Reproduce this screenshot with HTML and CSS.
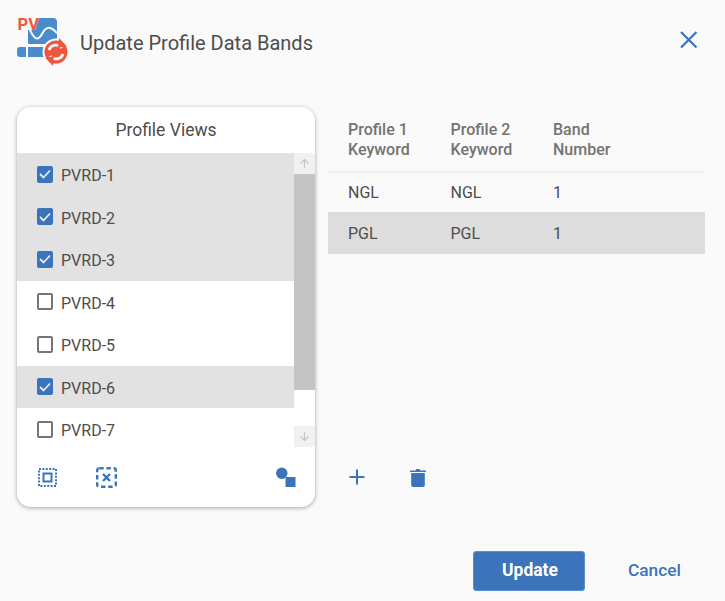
FILE: index.html
```html
<!DOCTYPE html>
<html>

<head>
    <title>Update Profile Data Bands</title>
    <link rel="stylesheet" href="styles.css">
</head>

<body>
    <div class="dialog">
        <div class="dialog-head">
            <svg class="logo" width="56" height="54" viewBox="0 -1 56 54">
                <path d="M22 1H36Q40 1 40 5V27H11V13H18Z" fill="#4a8ccb"/>
                <path d="M3 30H9V40H3Q0 40 0 37V33Q0 30 3 30ZM11 30H30V40H11Z" fill="#4a8ccb"/>
                <path d="M11 8C17 24 21 24 25 17C29 9 33 9 40 16" fill="none" stroke="#fff" stroke-width="2"/>
                <text class="logo-text" x="0.500" y="13">PV</text>
                <circle cx="39" cy="35" r="13.500" fill="#fafafa"/>
                <circle cx="39" cy="35" r="11.500" fill="#f0553d"/>
                <path d="M32 33A7.500 7.500 0 0 1 45 31" fill="none" stroke="#fafafa" stroke-width="2.800"/>
                <path d="M46 37A7.500 7.500 0 0 1 33 39" fill="none" stroke="#fafafa" stroke-width="2.800"/>
                <path d="M42 21L49.500 29L41 31Z" fill="#f0553d"/>
                <path d="M36 49L28.500 41L37 39Z" fill="#f0553d"/>
            </svg>
            <h1 class="dialog-title">Update Profile Data Bands</h1>
            <button class="close-btn" aria-label="Close">
                <svg width="18" height="18" viewBox="0 0 18 18">
                    <path d="M1 1L16.500 16.500M16.500 1L1 16.500" fill="none" stroke="#3b74bb" stroke-width="2.200"/>
                </svg>
            </button>
        </div>

        <div class="dialog-body">
            <div class="views-card">
                <div class="views-title">Profile Views</div>
                <div class="views-list-wrap">
                    <div class="views-list">
                        <div class="view-row selected"><span class="check on"><svg width="12" height="10" viewBox="0 0 12 10"><path d="M1 5L4.500 8.500L11 1.500" fill="none" stroke="#e8eef6" stroke-width="1.800"/></svg></span><span class="view-name">PVRD-1</span></div>
                        <div class="view-row selected"><span class="check on"><svg width="12" height="10" viewBox="0 0 12 10"><path d="M1 5L4.500 8.500L11 1.500" fill="none" stroke="#e8eef6" stroke-width="1.800"/></svg></span><span class="view-name">PVRD-2</span></div>
                        <div class="view-row selected"><span class="check on"><svg width="12" height="10" viewBox="0 0 12 10"><path d="M1 5L4.500 8.500L11 1.500" fill="none" stroke="#e8eef6" stroke-width="1.800"/></svg></span><span class="view-name">PVRD-3</span></div>
                        <div class="view-row"><span class="check"></span><span class="view-name">PVRD-4</span></div>
                        <div class="view-row"><span class="check"></span><span class="view-name">PVRD-5</span></div>
                        <div class="view-row selected"><span class="check on"><svg width="12" height="10" viewBox="0 0 12 10"><path d="M1 5L4.500 8.500L11 1.500" fill="none" stroke="#e8eef6" stroke-width="1.800"/></svg></span><span class="view-name">PVRD-6</span></div>
                        <div class="view-row"><span class="check"></span><span class="view-name">PVRD-7</span></div>
                    </div>
                    <div class="scrollbar">
                        <div class="scroll-arrow">
                            <svg width="11" height="11" viewBox="0 0 11 11"><path d="M5.500 10V1.500M1.500 5.500L5.500 1.500L9.500 5.500" fill="none" stroke="#c6c6c6" stroke-width="1.300"/></svg>
                        </div>
                        <div class="scroll-thumb"></div>
                        <div class="scroll-track"></div>
                        <div class="scroll-arrow">
                            <svg width="11" height="11" viewBox="0 0 11 11"><path d="M5.500 1V9.500M1.500 5.500L5.500 9.500L9.500 5.500" fill="none" stroke="#c6c6c6" stroke-width="1.300"/></svg>
                        </div>
                    </div>
                </div>
                <div class="views-tools">
                    <svg width="19" height="19" viewBox="0 0 19 19">
                        <path d="M1 1H18V18H1Z" fill="none" stroke="#3b74bb" stroke-width="2" stroke-dasharray="2 1.400"/>
                        <path d="M5.500 5.500H13.500V13.500H5.500Z" fill="none" stroke="#3b74bb" stroke-width="2"/>
                    </svg>
                    <svg class="tool-clear" width="21" height="21" viewBox="0 0 21 21">
                        <rect x="1.200" y="1.200" width="18.600" height="18.600" rx="2" fill="none" stroke="#3b74bb" stroke-width="2.400" stroke-dasharray="4.500 2.700"/>
                        <path d="M7 7L14 14M14 7L7 14" fill="none" stroke="#3b74bb" stroke-width="2.400"/>
                    </svg>
                    <svg class="tool-shapes" width="20" height="20" viewBox="0 0 20 20">
                        <circle cx="5.800" cy="6.300" r="5.700" fill="#3b74bb"/>
                        <rect x="9.500" y="10" width="10" height="10" fill="#3b74bb"/>
                    </svg>
                </div>
            </div>

            <div class="bands">
                <table class="bands-table">
                    <thead>
                        <tr>
                            <th>Profile 1<br>Keyword</th>
                            <th>Profile 2<br>Keyword</th>
                            <th>Band<br>Number</th>
                            <th></th>
                        </tr>
                    </thead>
                    <tbody>
                        <tr>
                            <td>NGL</td>
                            <td>NGL</td>
                            <td>1</td>
                            <td></td>
                        </tr>
                        <tr class="picked">
                            <td>PGL</td>
                            <td>PGL</td>
                            <td>1</td>
                            <td></td>
                        </tr>
                    </tbody>
                </table>
                <div class="bands-tools">
                    <svg width="16" height="16" viewBox="0 0 16 16">
                        <path d="M8 .5V15.500M.5 8H15.500" fill="none" stroke="#3b74bb" stroke-width="2"/>
                    </svg>
                    <svg class="tool-trash" width="16" height="19" viewBox="0 0 16 19">
                        <path d="M0 2.500H5.500L6.500 1H9.500L10.500 2.500H16V4H0Z" fill="#3b74bb"/>
                        <path d="M1.200 5H14.800V17Q14.800 19 12.800 19H3.200Q1.200 19 1.200 17Z" fill="#3b74bb"/>
                    </svg>
                </div>
            </div>
        </div>

        <div class="dialog-foot">
            <button class="btn-update">Update</button>
            <button class="btn-cancel">Cancel</button>
        </div>
    </div>
</body>

</html>
```

FILE: styles.css
```css
body {
    margin: 0;
    background-color: #fafafa;
    font-family: Roboto, "Liberation Sans", sans-serif;
    color: #4d4d4d;
}

.dialog {
    width: 725px;
    height: 601px;
    overflow: hidden;
}

.dialog-head {
    display: flex;
    align-items: center;
    height: 86px;
    padding: 0 27px 0 17px;
}

.logo {
    flex: none;
    margin-right: 7px;
}

.logo-text {
    font-family: Roboto, sans-serif;
    font-size: 16.500px;
    font-weight: 700;
    fill: #f0553d;
}

.dialog-title {
    flex: 1;
    margin: 0;
    font-size: 20px;
    font-weight: 400;
}

.close-btn {
    display: flex;
    padding: 0;
    margin-top: -7px;
    margin-left: -1px;
    background: none;
    border: none;
}

.dialog-body {
    display: flex;
    height: 400px;
    margin-top: 21px;
    padding: 0 20px 0 17px;
}

.views-card {
    display: flex;
    flex-direction: column;
    flex: none;
    width: 298px;
    overflow: hidden;
    background-color: #fff;
    border-radius: 14px;
    box-shadow: 0 1px 4px rgba(0, 0, 0, 0.35);
}

.views-title {
    height: 46px;
    line-height: 46px;
    text-align: center;
    font-size: 17.500px;
}

.views-list-wrap {
    display: flex;
    height: 294px;
}

.views-list {
    flex: 1;
    overflow: hidden;
}

.view-row {
    display: flex;
    align-items: center;
    height: 42.500px;
    padding-left: 20px;
    font-size: 16px;
}

.view-row.selected {
    background-color: #e2e2e2;
}

.view-name {
    padding-top: 3px;
}

.check {
    display: flex;
    align-items: center;
    justify-content: center;
    box-sizing: border-box;
    width: 16px;
    height: 17px;
    margin-right: 8px;
    border: 2px solid #757575;
    border-radius: 2px;
}

.check.on {
    background-color: #3b74bb;
    border-color: #3b74bb;
}

.scrollbar {
    display: flex;
    flex-direction: column;
    flex: none;
    width: 21px;
}

.scroll-arrow {
    display: flex;
    align-items: center;
    justify-content: center;
    height: 21px;
    background-color: #f1f1f1;
}

.scroll-thumb {
    height: 216px;
    background-color: #c4c4c4;
}

.scroll-track {
    flex: 1;
}

.views-tools {
    display: flex;
    align-items: center;
    flex: 1;
    padding: 0 19px 0 21px;
}

.tool-clear {
    margin-left: 39px;
}

.tool-shapes {
    margin-left: auto;
}

.bands {
    display: flex;
    flex-direction: column;
    flex: 1;
    margin-left: 13px;
}

.bands-table {
    width: 377px;
    table-layout: fixed;
    border-collapse: collapse;
    font-size: 16px;
}

.bands-table th {
    box-sizing: border-box;
    width: 102.500px;
    height: 65px;
    padding: 2px 0 0 20px;
    text-align: left;
    font-size: 16px;
    font-weight: 500;
    line-height: 20px;
    color: #737373;
    border-bottom: 2px solid #eeeeee;
}

.bands-table th:last-child {
    width: auto;
}

.bands-table td {
    height: 39px;
    padding: 0 0 0 20px;
}

.bands-table tr.picked td {
    height: 42px;
    background-color: #dddddd;
}

.bands-tools {
    display: flex;
    align-items: center;
    height: 60px;
    margin-top: auto;
    padding-left: 21px;
}

.tool-trash {
    margin-left: 45px;
}

.dialog-foot {
    display: flex;
    align-items: center;
    margin-top: 44px;
    padding-left: 473px;
}

.btn-update {
    width: 112px;
    height: 40px;
    padding: 0 0 2px 2px;
    background-color: #3b74bb;
    border: 1px solid #5c8fce;
    border-radius: 3px;
    color: #fff;
    font-family: inherit;
    font-size: 17.500px;
    font-weight: 700;
}

.btn-cancel {
    margin-left: 43px;
    padding: 0 0 2px;
    background: none;
    border: none;
    color: #3b74bb;
    font-family: inherit;
    font-size: 17.300px;
    font-weight: 500;
}
```
